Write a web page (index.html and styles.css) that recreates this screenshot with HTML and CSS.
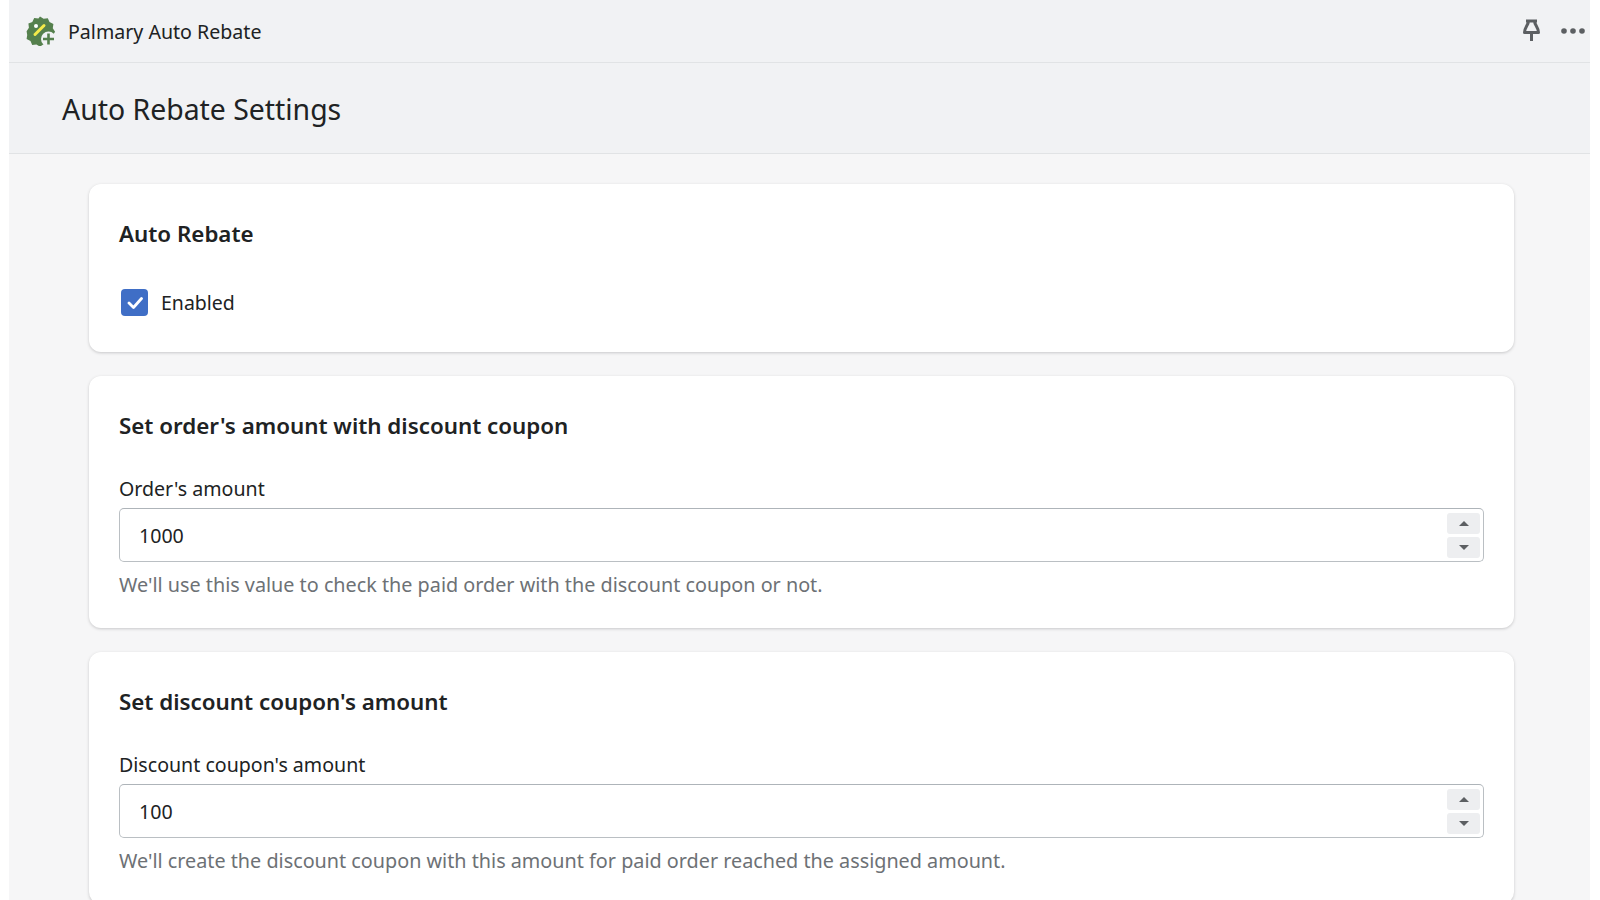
FILE: index.html
```html
<!DOCTYPE html>
<html lang="en">
<head>
  <meta charset="UTF-8" />
  <title>Auto Rebate Settings</title>
  <link rel="stylesheet" href="styles.css">
</head>
<body>
  <div class="app">

    <!-- App title bar -->
    <div class="topbar">
      <div class="brand">
        <svg class="logo" width="30" height="30" viewBox="0 0 30 30">
          <path fill="#55804d" d="M14 0.5l3.6 2.3 4.2-.6 1.7 3.9 3.9 1.9-.6 4.2 2.3 3.6-2.3 3.4.4 4.2-3.9 1.7-1.9 3.9-4.2-.6-3.2 2.3-3.6-2.3-4.2.5-1.7-3.9-3.9-1.9.6-4.2L.6 15.3l2.3-3.5-.5-4.2 3.9-1.7 1.9-3.9 4.2.6z"/>
          <path stroke="#f4ea4a" stroke-width="3" stroke-linecap="round" d="M9 18.5l9-9"/>
          <circle cx="10" cy="10" r="2" fill="#fff"/>
          <circle cx="22.5" cy="23" r="7.5" fill="#f1f2f4"/>
          <path stroke="#55804d" stroke-width="2.6" d="M22.5 17.5v11M17 23h11"/>
        </svg>
        <span class="app-name">Palmary Auto Rebate</span>
      </div>
      <div class="actions">
        <svg class="pin" width="17" height="22" viewBox="0 0 17 22">
          <path fill="none" stroke="#5c5f62" stroke-width="3" stroke-linejoin="round" d="M3 2h11M5.500 2c0 4-4 6.500-4 11.500h14c0-5-4-7.500-4-11.500"/>
          <path stroke="#5c5f62" stroke-width="3" d="M8.500 13v9"/>
        </svg>
        <svg width="26" height="8" viewBox="0 0 26 8">
          <circle cx="4" cy="4" r="2.800" fill="#5c5f62"/>
          <circle cx="13" cy="4" r="2.800" fill="#5c5f62"/>
          <circle cx="22" cy="4" r="2.800" fill="#5c5f62"/>
        </svg>
      </div>
    </div>

    <div class="page-header">
      <h1>Auto Rebate Settings</h1>
    </div>

    <div class="content">

      <section class="card card-first">
        <h2>Auto Rebate</h2>
        <label class="check">
          <span class="checkbox">
            <svg width="16" height="14" viewBox="0 0 16 14">
              <path fill="none" stroke="#fff" stroke-width="2.800" stroke-linecap="round" stroke-linejoin="round" d="M2 7l4.500 4.500 8-9"/>
            </svg>
          </span>
          <span>Enabled</span>
        </label>
      </section>

      <section class="card">
        <h2>Set order's amount with discount coupon</h2>
        <div class="field-label">Order's amount</div>
        <div class="number-field">
          <span class="value">1000</span>
          <div class="spinner">
            <span class="spin"><i class="arrow-up"></i></span>
            <span class="spin"><i class="arrow-down"></i></span>
          </div>
        </div>
        <p class="help">We'll use this value to check the paid order with the discount coupon or not.</p>
      </section>

      <section class="card">
        <h2>Set discount coupon's amount</h2>
        <div class="field-label">Discount coupon's amount</div>
        <div class="number-field">
          <span class="value">100</span>
          <div class="spinner">
            <span class="spin"><i class="arrow-up"></i></span>
            <span class="spin"><i class="arrow-down"></i></span>
          </div>
        </div>
        <p class="help">We'll create the discount coupon with this amount for paid order reached the assigned amount.</p>
      </section>

    </div>
  </div>
</body>
</html>
```

FILE: styles.css
```css
html, body {
  height: 100%;
  margin: 0;
  background: #fff;
  overflow: hidden;
}
body {
  font-family: "Noto Sans", Arial, sans-serif;
  color: #202223;
}
.app {
  margin: 0 10px 0 9px;
  height: 900px;
  background: #f6f6f7;
  overflow: hidden;
}
.topbar {
  height: 62px;
  display: flex;
  align-items: center;
  justify-content: space-between;
  background: #f1f2f4;
  border-bottom: 1px solid #e1e3e5;
  padding: 0 4px 0 17px;
}
.brand {
  display: flex;
  align-items: center;
  gap: 12px;
}
.app-name {
  font-size: 19.6px;
}
.actions {
  display: flex;
  align-items: center;
  gap: 20px;
}
.pin {
  margin-bottom: 2px;
}
.page-header {
  height: 88px;
  padding-top: 2px;
  background: #f1f2f4;
  border-bottom: 1px solid #e1e3e5;
  padding-left: 53px;
  display: flex;
  align-items: center;
}
h1 {
  margin: 0;
  font-size: 28.4px;
  font-weight: 400;
}
.content {
  padding: 30px 76px 0 80px;
  display: flex;
  flex-direction: column;
  gap: 24px;
}
.card {
  background: #fff;
  border-radius: 12px;
  box-shadow: 0 1px 3px rgba(63, 63, 68, 0.25);
  padding: 34px 30px 29px;
}
.card-first {
  padding-bottom: 36px;
}
h2 {
  margin: 0 0 33px;
  font-size: 22.35px;
  line-height: 32px;
  font-weight: 600;
}
.card-first h2 {
  margin-bottom: 39px;
}
.check {
  display: flex;
  align-items: center;
  gap: 13px;
  padding-left: 2px;
  font-size: 19.5px;
}
.checkbox {
  width: 27px;
  height: 27px;
  border-radius: 4px;
  background: #3f6ec6;
  display: flex;
  align-items: center;
  justify-content: center;
}
.field-label {
  font-size: 19.6px;
  line-height: 28px;
  margin-bottom: 5px;
}
.number-field {
  height: 52px;
  border: 1px solid #babfc3;
  border-top-color: #aeb4b9;
  border-radius: 5px;
  display: flex;
  align-items: center;
  justify-content: space-between;
  padding: 0 3px 0 19px;
  font-size: 19.6px;
}
.spinner {
  display: flex;
  flex-direction: column;
  gap: 3px;
}
.spin {
  width: 33px;
  height: 21px;
  background: #edeef0;
  border-radius: 3px;
  display: flex;
  align-items: center;
  justify-content: center;
}
.arrow-up, .arrow-down {
  width: 0;
  height: 0;
  border-left: 5px solid transparent;
  border-right: 5px solid transparent;
}
.arrow-up {
  border-bottom: 5px solid #5c5f62;
}
.arrow-down {
  border-top: 5px solid #5c5f62;
}
.help {
  margin: 9px 0 0;
  font-size: 19.8px;
  line-height: 28px;
  color: #6d7175;
}
```
